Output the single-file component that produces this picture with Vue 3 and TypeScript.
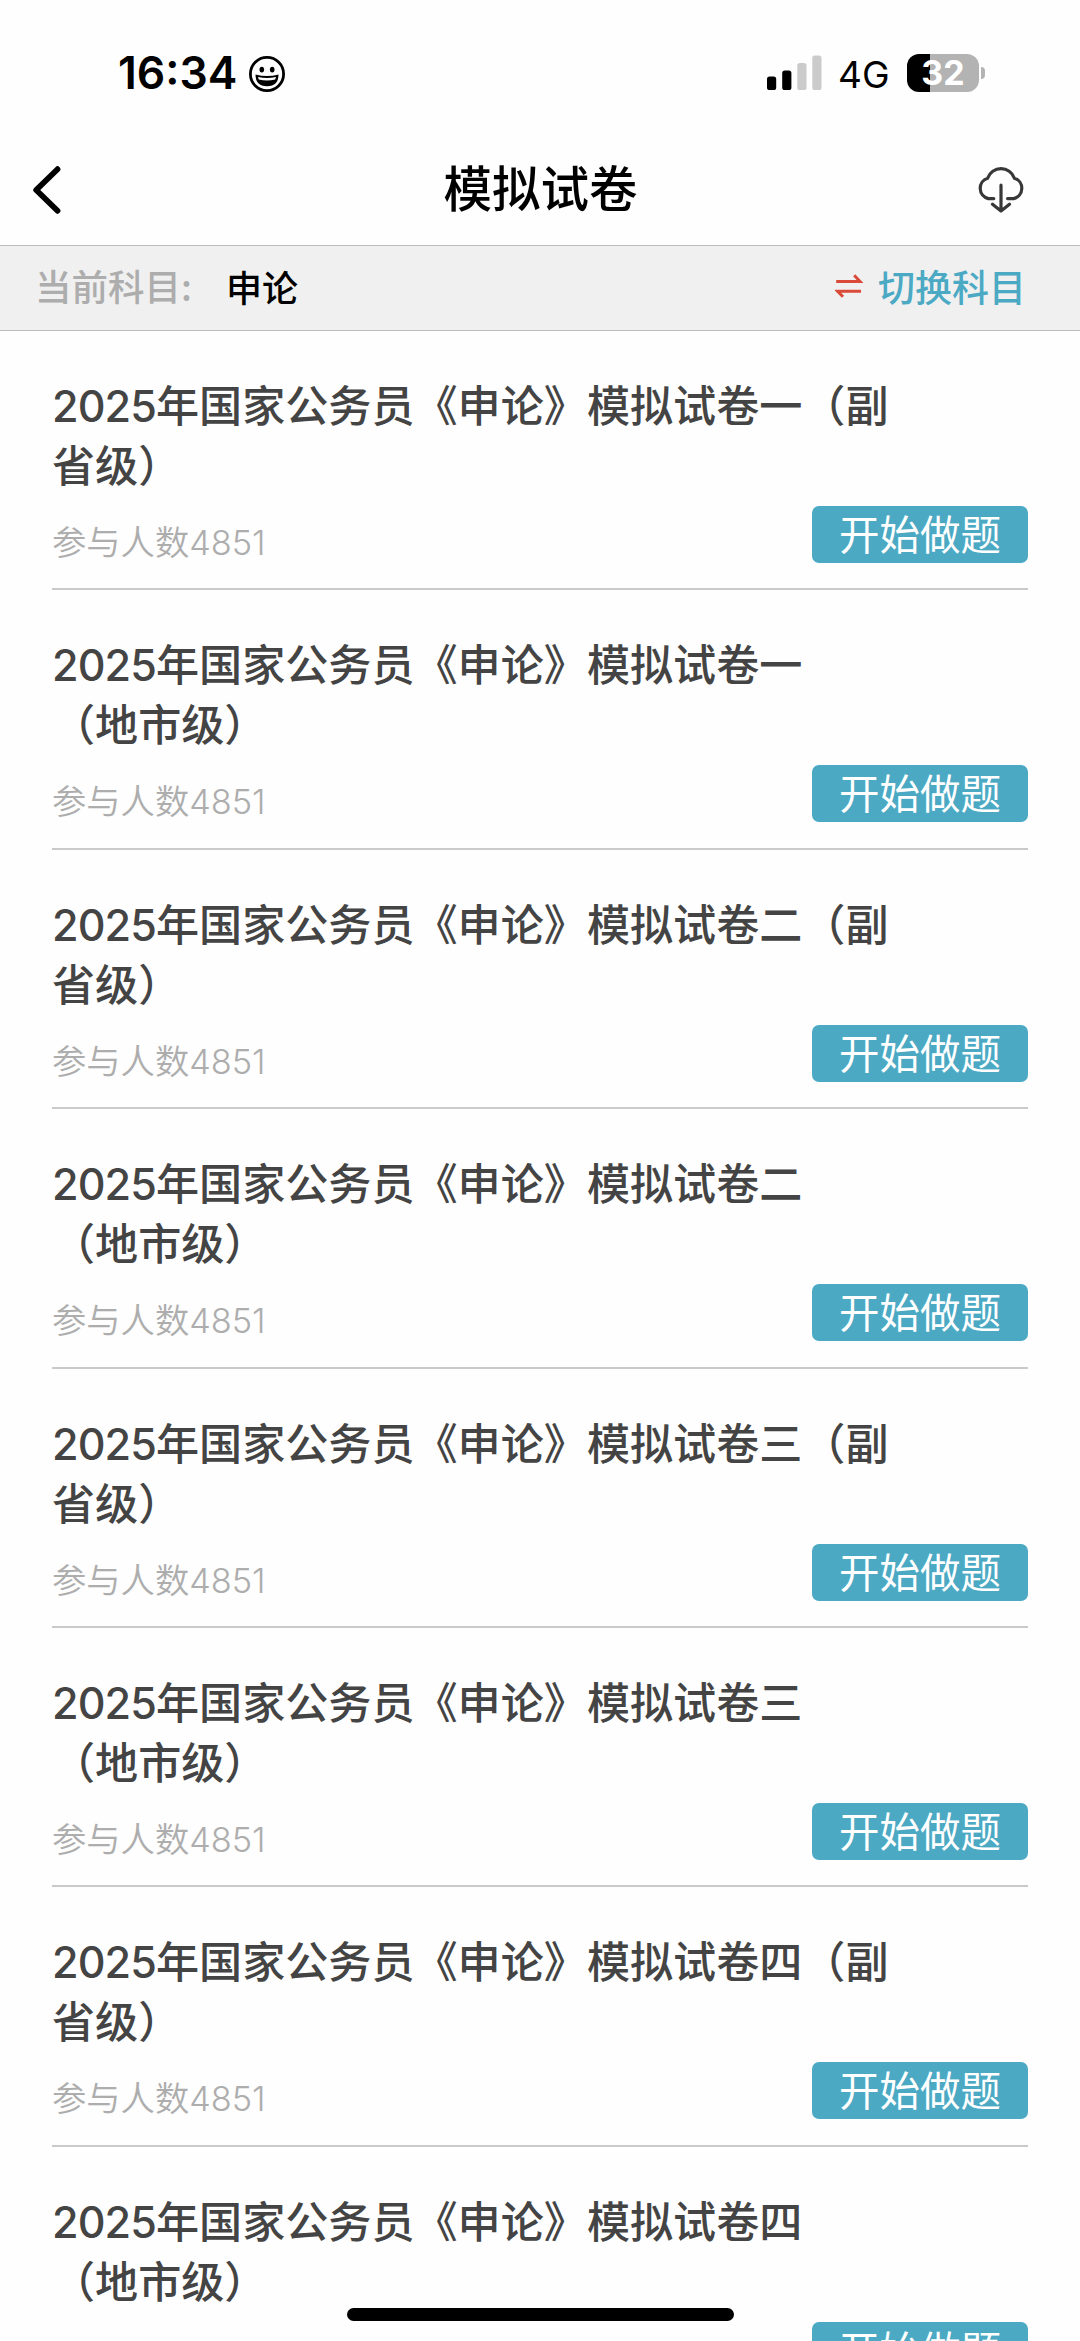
<script setup lang="ts">
interface Paper {
  lines: [string, string]
  count: number
}

const papers: Paper[] = ['一', '二', '三', '四'].flatMap((n): Paper[] => [
  { lines: [`年国家公务员《申论》模拟试卷${n}（副`, '省级）'], count: 4851 },
  { lines: [`年国家公务员《申论》模拟试卷${n}`, '（地市级）'], count: 4851 },
])
</script>

<template>
  <div class="screen" lang="zh-CN">
    <header class="status">
      <div class="clock">
        <span class="time">16:34</span>
        <svg class="smile" width="38" height="38" viewBox="0 0 38 38">
          <circle cx="19" cy="19" r="16.6" fill="none" stroke="#000" stroke-width="2.8" />
          <ellipse cx="13.8" cy="14.6" rx="2.3" ry="2.9" />
          <ellipse cx="24.2" cy="14.6" rx="2.3" ry="2.9" />
          <path d="M7.5 19.6 Q19 22.6 30.5 19.6 Q30.5 31.3 19 31.3 Q7.5 31.3 7.5 19.6Z" />
          <path d="M10 22 Q19 24.2 28 22 L27.2 24.4 Q19 26.4 10.8 24.4Z" fill="#fefefe" />
        </svg>
      </div>
      <div class="signals">
        <svg width="55" height="36" viewBox="0 0 55 36">
          <rect x="0" y="21.5" width="9.2" height="13.5" rx="2.6" />
          <rect x="15.2" y="15.5" width="9.2" height="19.5" rx="2.6" />
          <rect x="30.3" y="8" width="9.2" height="27" rx="2.6" fill="#cbcbcb" />
          <rect x="45.3" y="0.5" width="9.2" height="34.5" rx="2.6" fill="#cbcbcb" />
        </svg>
        <span class="net">4G</span>
        <div class="battery"><span>32</span></div>
        <i class="cap"></i>
      </div>
    </header>

    <nav class="nav">
      <svg width="32" height="52" viewBox="0 0 32 52">
        <path d="M25.5 5.2 L4.2 26 L25.5 46.8" fill="none" stroke="#000" stroke-width="5.8" stroke-linecap="round" stroke-linejoin="round" />
      </svg>
      <h1>模拟试卷</h1>
      <svg class="cloud" width="50" height="48" viewBox="0 0 50 48">
        <g fill="none" stroke="#383838" stroke-width="3.2" stroke-linecap="round" stroke-linejoin="round">
          <path d="M17.8 33.6 H12.3 A10.6 10.6 0 0 1 11.6 13.2 A14.2 14.2 0 0 1 38.4 13.2 A10.6 10.6 0 0 1 37.7 33.6 H31.6" />
          <path d="M25 20.2 V46 M16.5 39.2 L25 46 L33.5 39.2" />
        </g>
      </svg>
    </nav>

    <section class="subject">
      <span class="label">当前科目:</span>
      <strong>申论</strong>
      <svg width="28" height="26" viewBox="0 0 28 26">
        <path d="M1.2 8.6 H25.2 L19.2 2.2 M26 18.2 H2.6 L8 23.8" fill="none" stroke="#da4a38" stroke-width="3" />
      </svg>
      <span class="switch">切换科目</span>
    </section>

    <main class="list">
      <article v-for="(p, i) in papers" :key="i" class="paper">
        <h2>
          <span class="row"><span class="year">2025</span>{{ p.lines[0] }}</span>
          <span class="row">{{ p.lines[1] }}</span>
        </h2>
        <div class="foot">
          <p>参与人数<span class="num">{{ p.count }}</span></p>
          <button type="button">开始做题</button>
        </div>
      </article>
    </main>
    <div class="home"></div>
  </div>
</template>

<style>
body {
  margin: 0;
  background: #fefefe;
}
</style>

<style scoped>
.screen {
  position: relative;
  width: 1080px;
  height: 2341px;
  overflow: hidden;
  background: #fefefe;
  color: #000;
  font-family: 'Noto Sans CJK SC', sans-serif;
  text-spacing-trim: space-all;
}
.status {
  display: flex;
  justify-content: space-between;
  height: 145px;
  box-sizing: border-box;
  padding: 50px 95px 0 118px;
  font-family: Inter, sans-serif;
}
.clock,
.signals {
  display: flex;
  align-items: center;
  height: 46px;
}
.time {
  width: 130px;
  font-size: 44.5px;
  font-weight: 600;
  letter-spacing: 0;
  white-space: nowrap;
}
.smile {
  margin-top: 1px;
}
.net {
  width: 50px;
  margin: 3px 0 0 16px;
  font-size: 37px;
  font-weight: 400;
}
.battery {
  width: 72px;
  height: 38px;
  margin-left: 19px;
  margin-top: -1px;
  border-radius: 12px;
  background: linear-gradient(90deg, #000 23px, #b3b3b3 23px);
  color: #fff;
  font-size: 34px;
  font-weight: 700;
  line-height: 38px;
  text-align: center;
}
.cap {
  width: 4px;
  height: 12px;
  margin-left: 2px;
  border-radius: 0 6px 6px 0;
  background: #b3b3b3;
}
.nav {
  display: flex;
  align-items: center;
  justify-content: space-between;
  height: 100px;
  box-sizing: border-box;
  padding: 0 54px 10px 32px;
}
.nav h1 {
  margin: 0 0 9px 41px;
  font-size: 48.5px;
  font-weight: 500;
  line-height: 60px;
}
.cloud {
  margin-bottom: 2px;
}
.subject {
  display: flex;
  align-items: center;
  height: 86px;
  box-sizing: border-box;
  padding: 0 54px 4px 35px;
  border-top: 1px solid #bdbdbd;
  border-bottom: 1px solid #bdbdbd;
  background: #f0f0f0;
  font-size: 36.5px;
  line-height: 50px;
}
.label {
  width: 191px;
  color: #adadad;
  font-weight: 500;
}
.subject strong {
  font-size: 36px;
  font-weight: 500;
}
.subject svg {
  margin-left: auto;
}
.switch {
  margin-left: 15px;
  color: #4ba9c4;
  font-size: 37px;
  font-weight: 500;
}
.list {
  padding: 0 52px;
}
.paper {
  height: 259.4px;
  box-sizing: border-box;
  padding-top: 42px;
  border-bottom: 2px solid #cacaca;
}
.paper h2 {
  margin: 0;
  color: #444;
  font-size: 43.1px;
  font-weight: 500;
  line-height: 60px;
}
.row {
  display: block;
  height: 60px;
  white-space: nowrap;
}
.year {
  font-family: Inter, sans-serif;
  letter-spacing: -0.9px;
}
.foot {
  display: flex;
  justify-content: space-between;
}
.foot p {
  margin: 22px 0 0;
  color: #adadad;
  font-size: 34.3px;
  font-weight: 350;
  line-height: 50px;
}
.num {
  font-family: Inter, sans-serif;
}
.foot button {
  width: 216px;
  height: 57px;
  margin: 13px 0 0;
  padding: 0 0 3px;
  border: 0;
  border-radius: 7px;
  background: #4ba9c4;
  color: #fff;
  font-family: 'Noto Sans CJK SC', sans-serif;
  font-size: 40.5px;
  font-weight: 400;
  line-height: 54px;
}
.home {
  position: absolute;
  bottom: 20px;
  left: 347px;
  width: 387px;
  height: 13px;
  border-radius: 7px;
  background: #000;
}
</style>
